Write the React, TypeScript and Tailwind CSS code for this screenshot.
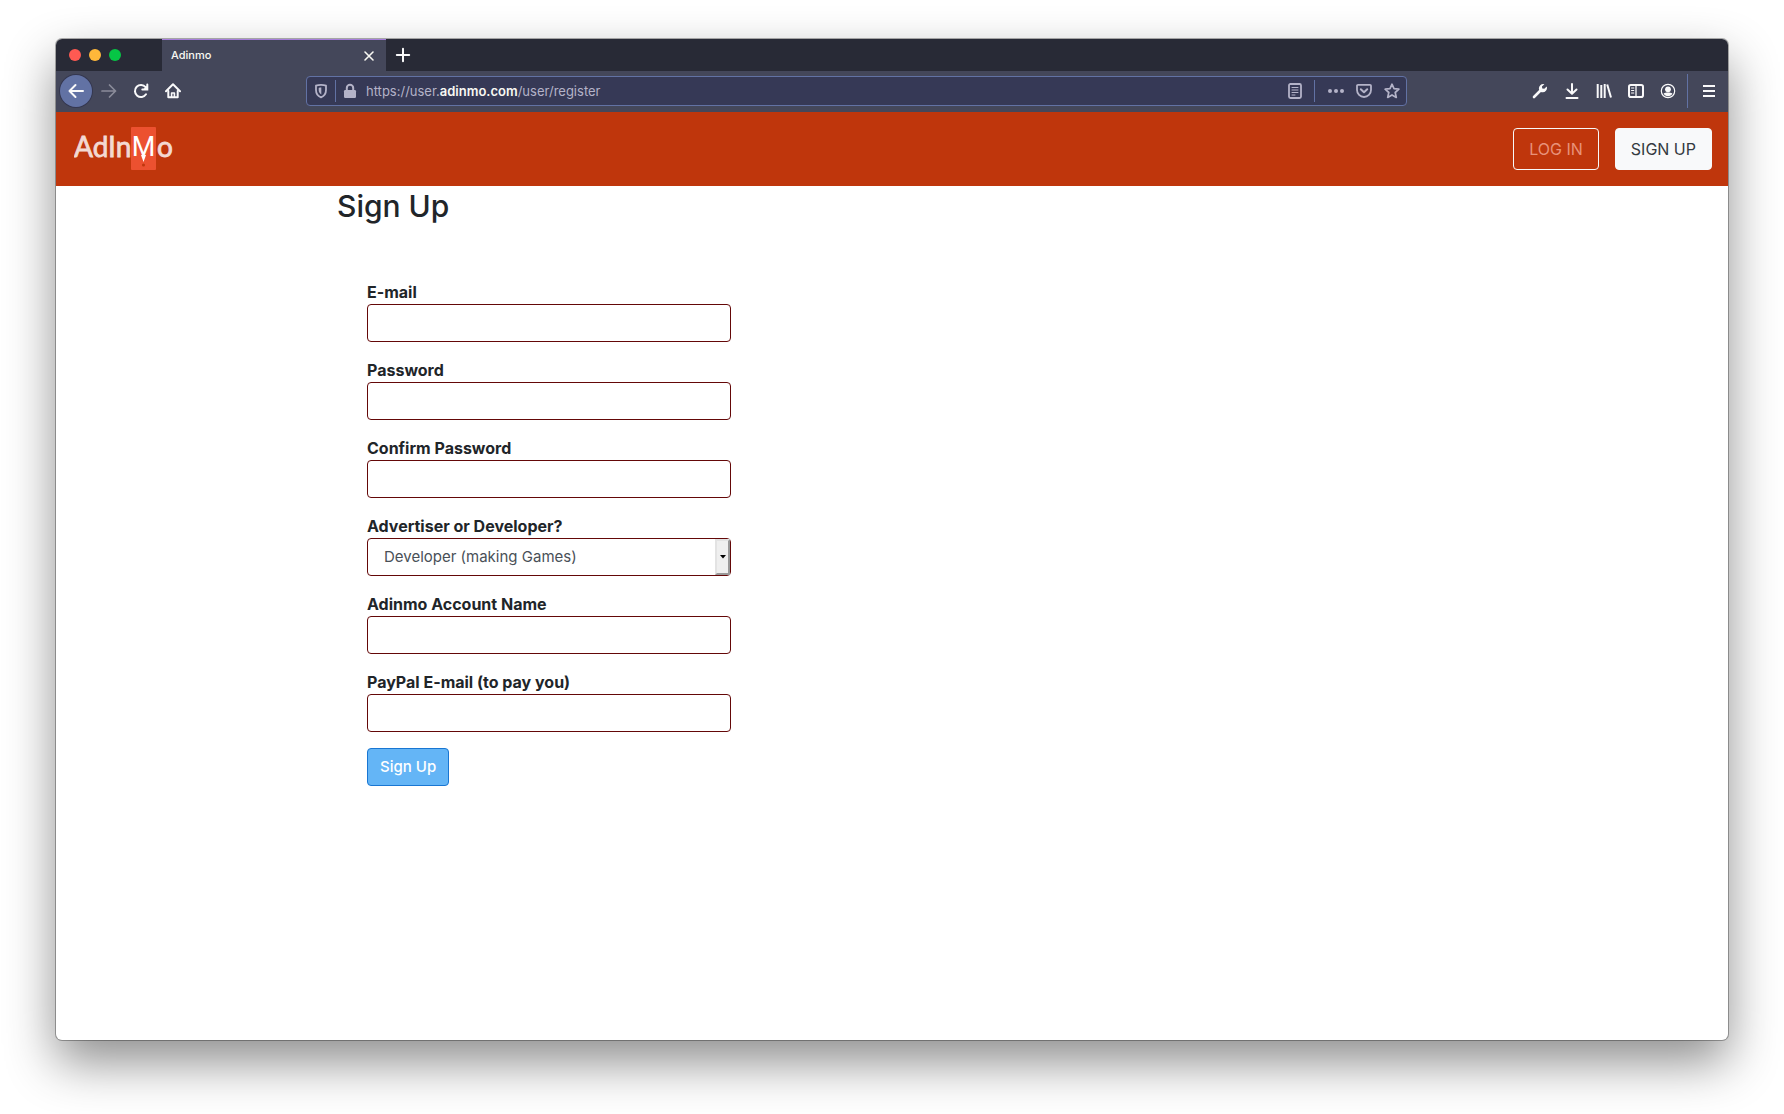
import type { ReactNode } from "react";

interface IconButtonProps {
  label: string;
  children: ReactNode;
  className?: string;
  disabled?: boolean;
}

function IconButton({ label, children, className = "h-8 w-8 text-[#f9f9fa]", disabled }: IconButtonProps) {
  return (
    <button
      type="button"
      aria-label={label}
      disabled={disabled}
      className={`flex shrink-0 items-center justify-center ${className}`}
    >
      <svg
        viewBox="0 0 16 16"
        className="h-4 w-4"
        fill="none"
        stroke="currentColor"
        strokeWidth="2"
        strokeLinecap="round"
        strokeLinejoin="round"
      >
        {children}
      </svg>
    </button>
  );
}

function TabBar() {
  return (
    <div className="flex h-8 bg-[#282a36]">
      <div className="flex w-[106px] shrink-0 items-center gap-2 pl-[13px]">
        <span className="h-3 w-3 rounded-full bg-[#ff5a52]" />
        <span className="h-3 w-3 rounded-full bg-[#ffb83a]" />
        <span className="h-3 w-3 rounded-full bg-[#06c645]" />
      </div>
      <div className="flex w-56 shrink-0 items-center justify-between border-t border-[#a77fdc] bg-[#44475a] pr-px pl-[9px] text-[11px] font-medium text-[#f8f8f2]">
        <span>Adinmo</span>
        <IconButton label="Close tab" className="h-7 w-8">
          <path d="M4 4l8 8M12 4l-8 8" strokeWidth="1.6" />
        </IconButton>
      </div>
      <IconButton label="New tab" className="h-8 w-[34px] text-[#f9f9fa]">
        <path d="M8 1.8v12.4M1.8 8h12.4" />
      </IconButton>
    </div>
  );
}

function UrlBar() {
  return (
    <div className="mx-[117px] flex h-[30px] min-w-0 flex-1 items-center rounded border border-[#6272a4] bg-[#363956] text-[#b4b3c8]">
      <IconButton label="Tracking protection" className="h-7 w-7">
        <path d="M8 1.8c1.8 0 3.5.3 5 .9V7c0 3.300-1.700 6-5 7.300C4.700 13 3 10.300 3 7V2.700c1.500-.6 3.200-.9 5-.9z" strokeWidth="1.8" />
        <path d="M8.300 4.500v7C6.500 10.400 5.700 8.800 5.700 7V4.900c.8-.3 1.700-.4 2.600-.4z" fill="currentColor" stroke="none" />
      </IconButton>
      <span className="h-[22px] w-px bg-[#6272a4]" />
      <IconButton label="Site information" className="h-7 w-7">
        <rect x="2" y="7" width="12" height="8" rx="1.200" fill="currentColor" stroke="none" />
        <path d="M4.800 7.500V5a3.200 3.200 0 0 1 6.400 0v2.500" />
      </IconButton>
      <div className="min-w-0 flex-1 truncate pt-0.5 pl-0.5 text-[13px]">
        https://user.<span className="font-semibold text-[#f8f8f2]">adinmo.com</span>/user/register
      </div>
      <IconButton label="Reader view" className="h-7 w-[38px]">
        <rect x="2" y="1" width="12" height="14" rx="1.500" strokeWidth="1.800" />
        <path d="M5 4.500h6M5 7h6M5 9.500h6M5 12h3" strokeWidth="1" />
      </IconButton>
      <span className="h-[22px] w-px bg-[#6272a4]" />
      <div className="flex pl-[7px]">
        <IconButton label="Page actions" className="h-7 w-7">
          <g fill="currentColor" stroke="none">
            <circle cx="2" cy="8" r="2" />
            <circle cx="8" cy="8" r="2" />
            <circle cx="14" cy="8" r="2" />
          </g>
        </IconButton>
        <IconButton label="Save to Pocket" className="h-7 w-7">
          <path d="M2 1.800h12a1 1 0 0 1 1 1V7A7 7 0 0 1 1 7V2.800a1 1 0 0 1 1-1z" strokeWidth="1.800" />
          <path d="M4.800 6.200L8 9.200l3.200-3" />
        </IconButton>
        <IconButton label="Bookmark this page" className="h-7 w-7">
          <path d="M8 1.200l2 4.500 4.900.5-3.700 3.300 1.100 4.900L8 11.900l-4.300 2.500 1.100-4.900L1.100 6.200 6 5.700z" strokeWidth="1.700" />
        </IconButton>
      </div>
    </div>
  );
}

function Toolbar() {
  return (
    <div className="flex h-[41px] items-center bg-[#44475a] pr-[3px] pb-px pl-1">
      <IconButton label="Back" className="mr-px h-8 w-8 rounded-full bg-[#6272a4] text-[#f9f9fa] ring-1 ring-[#343750]">
        <path d="M15 8H1.500M7.500 2L1.500 8l6 6" />
      </IconButton>
      <IconButton label="Forward" disabled className="h-8 w-8 text-[#8b8c9a]">
        <path d="M1 8h13.500M8.500 2l6 6-6 6" strokeWidth="1.700" />
      </IconButton>
      <IconButton label="Reload">
        <path d="M13 11.300A6 6 0 1 1 12.600 4.200" />
        <path d="M14.300 1.500v5h-5" strokeLinejoin="miter" />
        <path d="M14.500 2v4.700H9.800z" fill="currentColor" stroke="none" />
      </IconButton>
      <IconButton label="Home">
        <path d="M1 8.300l7-7 7 7" />
        <path d="M3.300 8v6.200h9.400V8" />
        <path d="M6.600 14v-4h2.800v4" strokeWidth="1.600" />
      </IconButton>
      <UrlBar />
      <div className="flex shrink-0 items-center">
        <IconButton label="Developer tools">
          <path d="M2 14l6.500-6.500" strokeWidth="2.600" />
          <path
            d="M14.700 3.500l-2.400 2.300-2-.3-.4-2 2.500-2.300A4.300 4.300 0 0 0 7 6.200c.3 1.600 1.300 2.700 2.800 3A4.300 4.300 0 0 0 14.700 3.500z"
            fill="currentColor"
            stroke="none"
          />
        </IconButton>
        <IconButton label="Downloads">
          <path d="M8 1v9.500M3.500 6.500L8 10.800l4.500-4.300M2.500 15h11" />
        </IconButton>
        <IconButton label="Library">
          <path d="M1.700 1v14M5.300 2v13M8.700 1v14M11.200 1.500l3.800 13" strokeLinecap="butt" />
        </IconButton>
        <IconButton label="Sidebars">
          <rect x="1" y="2" width="14" height="12" rx="1.800" />
          <path d="M8 2v12" strokeWidth="1.300" />
          <path d="M3.500 5h2.300M3.500 7.500h2.300M3.500 10h2.300" strokeWidth="1" />
        </IconButton>
        <IconButton label="Account">
          <circle cx="8" cy="8" r="6.700" strokeWidth="1.200" />
          <circle cx="8" cy="6.300" r="2.900" fill="currentColor" stroke="none" />
          <path d="M3.600 10.500c1.200-.8 2.500-1 4.400-1s3.200.2 4.400 1C11.500 12.300 10 13.300 8 13.300s-3.500-1-4.400-2.800z" fill="currentColor" stroke="none" />
        </IconButton>
        <span className="mr-[5px] ml-[3px] h-[34px] w-px bg-[#6272a4]" />
        <IconButton label="Open menu">
          <path d="M2 3h12M2 8h12M2 13h12" strokeLinecap="butt" />
        </IconButton>
      </div>
    </div>
  );
}

function Logo() {
  return (
    <svg viewBox="0 0 100 44" className="h-11 w-[100px]" role="img" aria-label="AdInMo">
      <rect x="57" y="0" width="25" height="43" rx="1" fill="#ec5130" />
      <circle cx="69.500" cy="38" r="1.500" fill="#bf360c" />
      {/* pointer under the M */}
      <path d="M67 28h5L69.500 35z" fill="#fff" />
      <g fontFamily="Lato, sans-serif" fontSize="28" strokeWidth="0.800">
        <text x="0" y="30" fill="#f3d9d2" stroke="#f3d9d2">AdIn</text>
        <text x="83" y="30" fill="#f3d9d2" stroke="#f3d9d2">o</text>
      </g>
      <text x="69.500" y="29" fill="#fff" fontFamily="Roboto, sans-serif" fontSize="27" textAnchor="middle">
        M
      </text>
    </svg>
  );
}

function SiteHeader() {
  return (
    <header className="flex h-[74px] items-center justify-between bg-[#bf360c] px-4">
      <a href="/" className="block pl-0.5">
        <Logo />
      </a>
      <nav className="flex gap-4">
        <a href="/user/login" className="rounded border border-[#f8f9fa] px-[15px] py-2 text-[#e8927a]">
          LOG IN
        </a>
        <a href="/user/register" className="rounded border border-[#f8f9fa] bg-[#f8f9fa] px-[15px] py-2 text-[#343a40]">
          SIGN UP
        </a>
      </nav>
    </header>
  );
}

interface Field {
  id: string;
  label: string;
  type?: string;
  options?: string[];
}

const fields: Field[] = [
  { id: "email", label: "E-mail", type: "email" },
  { id: "password", label: "Password", type: "password" },
  { id: "confirm", label: "Confirm Password", type: "password" },
  { id: "role", label: "Advertiser or Developer?", options: ["Developer (making Games)"] },
  { id: "account", label: "Adinmo Account Name", type: "text" },
  { id: "paypal", label: "PayPal E-mail (to pay you)", type: "email" },
];

function FormField({ id, label, type, options }: Field) {
  return (
    <div>
      <label htmlFor={id} className="block leading-6 font-bold">
        {label}
      </label>
      {options ? (
        <div className="relative">
          <select
            id={id}
            className="block h-[38px] w-full appearance-none rounded border border-[#640808] bg-white px-4 pt-px text-[15px] text-[#495057]"
          >
            {options.map((option) => (
              <option key={option}>{option}</option>
            ))}
          </select>
          <span className="pointer-events-none absolute inset-y-px right-px flex w-[15px] items-center justify-center border-2 border-t-[#e3e3e3] border-r-[#999999] border-b-[#999999] border-l-[#e3e3e3] bg-[#efefef]">
            <svg viewBox="0 0 6 4" className="h-1 w-1.5 shrink-0">
              <path d="M0 0h6L3 3.500z" fill="#000" />
            </svg>
          </span>
        </div>
      ) : (
        <input id={id} type={type} className="block h-[38px] w-full rounded border border-[#640808] bg-white px-3" />
      )}
    </div>
  );
}

function SignUpPage() {
  return (
    <main className="mx-auto w-full max-w-[1140px] px-[15px]">
      <h1 className="pt-0.5 text-[30px] leading-9 font-medium">Sign Up</h1>
      <form className="mt-14 flex max-w-[394px] flex-col gap-4 pl-[30px]">
        {fields.map((field) => (
          <FormField key={field.id} {...field} />
        ))}
        <button
          type="submit"
          className="h-[38px] self-start rounded border border-[#1976d2] bg-[#64b5f6] px-3 text-[15px] font-medium text-white"
        >
          Sign Up
        </button>
      </form>
    </main>
  );
}

export default function App() {
  return (
    <div className="flex min-h-screen flex-col bg-white px-14 pt-[39px] pb-[74px] font-[Inter,sans-serif] text-base text-[#212529]">
      <div className="flex flex-1 flex-col overflow-hidden rounded-md bg-white shadow-[0_0_0_1px_rgba(0,0,0,0.3),0_22px_50px_rgba(0,0,0,0.45)]">
        <TabBar />
        <Toolbar />
        <SiteHeader />
        <SignUpPage />
      </div>
    </div>
  );
}
